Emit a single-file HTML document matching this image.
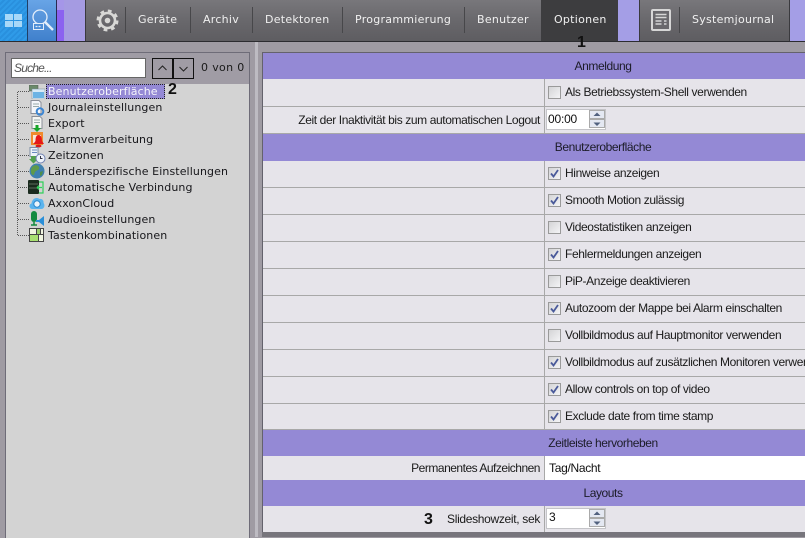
<!DOCTYPE html>
<html><head><meta charset="utf-8"><style>
html,body{margin:0;padding:0}
body{width:805px;height:537px;overflow:hidden;position:relative;background:#9f9ba3;font-family:"Liberation Sans",sans-serif}
.a{position:absolute}
.nav{position:absolute;top:0;height:41px;font:11px/40px "DejaVu Sans",sans-serif;letter-spacing:.27px;color:#f0f0f0;white-space:nowrap}
.sep{position:absolute;top:7px;width:1px;height:26px;background:#47474a}
.hd{position:absolute;left:263px;width:542px;background:#9489d5;font-size:12px;color:#1c1c28;letter-spacing:-.42px}
.hd span{position:absolute;left:0;width:680px;text-align:center;white-space:nowrap}
.r{position:absolute;left:263px;width:542px;background:#e6e4ea;border-bottom:1px solid #a8a8a8;box-sizing:border-box}
.r:before{content:"";position:absolute;left:281px;top:0;bottom:0;width:1px;background:#a8a8a8}
.l{position:absolute;right:265px;font-size:12px;color:#1a1a1a;white-space:nowrap;letter-spacing:-.39px}
.t{position:absolute;left:302px;font-size:12px;color:#1a1a1a;white-space:nowrap;letter-spacing:-.38px}
.c{position:absolute;left:285px;width:11px;height:11px;border:1px solid #9a9a9a;background:linear-gradient(135deg,#d4d4d6,#f4f4f6)}
.c svg{position:absolute;left:1px;top:1px}
.tr{position:absolute;left:48px;font:11px/14px "DejaVu Sans",sans-serif;color:#16161a;letter-spacing:.1px;white-space:nowrap}
.i{position:absolute;left:29px}
.d{position:absolute;left:18px;width:11px;height:0;border-top:1px dotted #555}
.b{position:absolute;font:bold 16px "Liberation Sans",sans-serif;color:#111}
</style></head><body>

<!-- top bar -->
<div class="a" style="left:0;top:0;width:805px;height:41px;background:linear-gradient(#78777b,#69686c 50%,#5e5d61)"></div>
<div class="a" style="left:0;top:41px;width:805px;height:1px;background:#2c2c30"></div>
<div class="a" style="left:0;top:0;width:27px;height:41px;background:repeating-linear-gradient(135deg,#2f9be8 0 2px,#2990de 2px 4px)"></div>
<div class="a" style="left:27px;top:0;width:1px;height:41px;background:#1f3f66"></div>
<div class="a" style="left:28px;top:0;width:28px;height:41px;background:linear-gradient(#68a4e6,#4080cc)"></div>
<div class="a" style="left:56px;top:0;width:1px;height:41px;background:#2a2a50"></div>
<div class="a" style="left:57px;top:0;width:7px;height:41px;background:linear-gradient(#a596e8 0 24%,#8b62f0 24%,#8b62f0)"></div>
<div class="a" style="left:64px;top:0;width:21px;height:41px;background:#a59be2"></div>
<div class="a" style="left:85px;top:0;width:1px;height:41px;background:#3a3a3e"></div>
<svg class="a" style="left:4px;top:13px" width="20" height="16"><rect x="1" y="1" width="8" height="6" fill="#a8d8f8"/><rect x="10" y="1" width="8" height="6" fill="#a8d8f8"/><rect x="1" y="8" width="8" height="6" fill="#a8d8f8"/><rect x="10" y="8" width="8" height="6" fill="#a8d8f8"/></svg>
<svg class="a" style="left:31px;top:8px" width="24" height="24" fill="none" stroke="#e4eefa"><circle cx="9" cy="9" r="7" stroke-width="1.300"/><path d="M14 14l8 8" stroke-width="2.400"/><rect x="2.500" y="15.500" width="10" height="6" fill="#4d8dd6" stroke-width="1"/><path d="M4.500 18.500h6" stroke-width="1.200" stroke-dasharray="2 1"/></svg>
<svg class="a" style="left:96px;top:9px" width="23" height="23" viewBox="0 0 23 23" fill="none"><circle cx="11.500" cy="11.500" r="9.500" stroke="#d8d8d6" stroke-width="3" stroke-dasharray="3.700 3.770"/><circle cx="11.500" cy="11.500" r="7.500" stroke="#d8d8d6" stroke-width="2.600"/><circle cx="11.500" cy="11.500" r="2.800" fill="#d8d8d6"/></svg>
<div class="sep" style="left:125px"></div>
<div class="nav" style="left:138px">Geräte</div>
<div class="sep" style="left:190px"></div>
<div class="nav" style="left:203px">Archiv</div>
<div class="sep" style="left:252px"></div>
<div class="nav" style="left:265px">Detektoren</div>
<div class="sep" style="left:342px"></div>
<div class="nav" style="left:355px">Programmierung</div>
<div class="sep" style="left:464px"></div>
<div class="nav" style="left:477px">Benutzer</div>
<div class="a" style="left:541px;top:0;width:77px;height:41px;background:#3d3d3f"></div>
<div class="nav" style="left:554px">Optionen</div>
<div class="a" style="left:618px;top:0;width:21px;height:41px;background:#a49ee6;border-right:1px solid #3a3a3e"></div>
<svg class="a" style="left:651px;top:9px" width="20" height="22"><rect x="1" y="1" width="18" height="20" rx="1" fill="#69686c" stroke="#d6d6d6" stroke-width="2"/><path d="M4.500 5.500h11M4.500 8.500h11M4.500 12h6M13 12h2.500M4.500 15h6M13 15h2.500" stroke="#d6d6d6" stroke-width="1.500"/></svg>
<div class="sep" style="left:679px"></div>
<div class="nav" style="left:692px">Systemjournal</div>
<div class="a" style="left:789px;top:0;width:16px;height:41px;background:#a49ee6;border-left:1px solid #3a3a3e"></div>

<!-- left panel -->
<div class="a" style="left:5px;top:52px;width:243px;height:485px;border:1px solid #6e6c78;border-bottom:0;background:#d3d3d3"></div>
<div class="a" style="left:6px;top:53px;width:243px;height:31px;background:#a09ca5"></div>
<div class="a" style="left:11px;top:58px;width:135px;height:20px;background:#fff;border:1px solid #666;box-sizing:border-box;font:italic 12px/18px 'Liberation Sans',sans-serif;color:#555;padding-left:2px;letter-spacing:-.8px">Suche...</div>
<div class="a" style="left:152px;top:58px;width:21px;height:21px;border:1px solid #111;box-sizing:border-box"><svg width="19" height="19"><path d="M5.500 11l4-4 4 4" fill="none" stroke="#222"/></svg></div>
<div class="a" style="left:173px;top:58px;width:21px;height:21px;border:1px solid #111;box-sizing:border-box"><svg width="19" height="19"><path d="M5.500 8l4 4 4-4" fill="none" stroke="#222"/></svg></div>
<div class="a" style="left:201px;top:61px;font:11px/14px 'DejaVu Sans',sans-serif;color:#1a1a1a;letter-spacing:.35px;white-space:nowrap">0 von 0</div>

<!-- tree -->
<div class="a" style="left:17px;top:92px;width:0;height:143px;border-left:1px dotted #555"></div>
<div class="d" style="top:91px"></div><div class="d" style="top:107px"></div><div class="d" style="top:123px"></div><div class="d" style="top:139px"></div><div class="d" style="top:155px"></div><div class="d" style="top:171px"></div><div class="d" style="top:187px"></div><div class="d" style="top:203px"></div><div class="d" style="top:219px"></div><div class="d" style="top:235px"></div>
<div class="a" style="left:46px;top:84px;width:119px;height:15px;background:#9489d5;border:1px dotted #222;box-sizing:border-box"></div>
<div class="tr" style="top:85px;color:#f4f4fa">Benutzeroberfläche</div>
<div class="tr" style="top:101px">Journaleinstellungen</div>
<div class="tr" style="top:117px">Export</div>
<div class="tr" style="top:133px">Alarmverarbeitung</div>
<div class="tr" style="top:149px">Zeitzonen</div>
<div class="tr" style="top:165px">Länderspezifische Einstellungen</div>
<div class="tr" style="top:181px">Automatische Verbindung</div>
<div class="tr" style="top:197px">AxxonCloud</div>
<div class="tr" style="top:213px">Audioeinstellungen</div>
<div class="tr" style="top:229px">Tastenkombinationen</div>

<svg class="i" style="top:85px" width="16" height="14"><rect x="0" y="0" width="9" height="6" fill="#6a8a6a" stroke="#555" stroke-width=".5"/><rect x="3" y="4" width="13" height="10" fill="#d8eaf6" stroke="#7a8a99" stroke-width=".5"/><rect x="4" y="7" width="11" height="6" fill="#6cb3e4"/></svg>
<svg class="i" style="top:100px" width="16" height="16" style="left:31px"><path d="M2 .5h8l2 2v11H2z" fill="#f4f6fa" stroke="#8a8f99"/><path d="M4 4h6M4 6.500h6" stroke="#9aa"/><circle cx="11" cy="11.500" r="3.300" fill="none" stroke="#3c86d4" stroke-width="2"/></svg>
<svg class="i" style="top:116px" width="16" height="16"><path d="M3 .5h8l2 2v10H3z" fill="#f4f6f4" stroke="#8a8f99"/><path d="M5 4h6M5 6.500h6" stroke="#9aa"/><path d="M6.500 9h3v3h2.500l-4 4-4-4h2.500z" fill="#17a52b"/></svg>
<svg class="i" style="top:132px" width="16" height="16"><rect x="2" y="0" width="12" height="13" fill="#f08a2c"/><rect x="4" y="3" width="8" height="8" fill="#f8e8d8"/><path d="M9.500 3c3 0 3.500 3.500 3.500 6l2 3H4.500l2-3c0-3 .5-6 3-6z" fill="#e51818"/><ellipse cx="9.500" cy="14" rx="3" ry="1.500" fill="#d81818"/></svg>
<svg class="i" style="top:147px" width="17" height="17"><path d="M1 .5h8v9H1z" fill="#eef2f8" stroke="#7f8fa5"/><path d="M3 3h5M3 5.500h5" stroke="#6a8ac0"/><path d="M2 9h5v3h2l-4.500 4.500L0 12h2z" fill="#55a050"/><circle cx="11.500" cy="11.500" r="4.500" fill="#eef2fa" stroke="#6e80b0"/><path d="M11.500 9v2.500h2" stroke="#334" fill="none"/></svg>
<svg class="i" style="top:163px" width="16" height="16"><circle cx="8" cy="8" r="7.500" fill="#3f80b0"/><path d="M3 4c3-3 6-2 7 0s-1 3-3 4-1 4-3 4-3-5-1-8z" fill="#5f9a4a"/><path d="M11 9l3-1-1 4-2 1z" fill="#4f8e4a"/></svg>
<svg class="i" style="top:179px;left:28px" width="16" height="16"><rect x="0" y="1" width="11" height="14" rx="1" fill="#1a2a1e"/><path d="M1 5h9M1 9h9" stroke="#5a6a5a"/><path d="M11 3h4v11h-4M9 8.500h5M9 8.500l2-2M9 8.500l2 2" fill="none" stroke="#2fd05a" stroke-width="1.200"/></svg>
<svg class="i" style="top:195px" width="16" height="16"><path d="M3.500 14C0 14-.5 9 2.500 8.500 3 4 7 1.500 10.500 4c3-.5 4.500 2 4 4 2 2 .5 6-2 6z" fill="#5ab4ee"/><circle cx="8" cy="9" r="3.200" fill="#eaf4fc" stroke="#2a86cc"/></svg>
<svg class="i" style="top:211px" width="17" height="16"><rect x="2" y="0" width="6" height="11" rx="3" fill="#148a3e"/><path d="M5 11v3M2 14h6" stroke="#148a3e" stroke-width="1.500"/><path d="M7 9h3l5-4v10l-5-4H7z" fill="#2a8fd8"/></svg>
<svg class="i" style="top:228px" width="15" height="14"><rect x="0" y="0" width="15" height="14" fill="#444"/><rect x="1" y="1" width="6" height="5" fill="#f0f5e0"/><rect x="8" y="1" width="3" height="5" fill="#9ad06a"/><rect x="12" y="1" width="2" height="5" fill="#f0f5e0"/><rect x="1" y="7" width="8" height="6" fill="#a8e070"/><rect x="10" y="7" width="4" height="6" fill="#f0f5e0"/></svg>

<div class="b" style="left:168px;top:81px">2</div>

<!-- splitter -->
<div class="a" style="left:255px;top:42px;width:3px;height:495px;background:#bdbbc2"></div>
<div class="a" style="left:262px;top:52px;width:543px;height:1px;background:#64626c"></div>
<div class="a" style="left:262px;top:52px;width:1px;height:480px;background:#64626c"></div>
<div class="a" style="left:262px;top:532px;width:543px;height:5px;background:#77757c"></div>

<div class="b" style="left:577px;top:34px">1</div>

<!-- table -->
<div class="hd" style="top:53px;height:26px"><span style="top:6px">Anmeldung</span></div>
<div class="r" style="top:79px;height:28px"><div class="c" style="top:7px"></div><div class="t" style="top:6px">Als Betriebssystem-Shell verwenden</div></div>
<div class="r" style="top:107px;height:27px"><div class="l" style="top:6px">Zeit der Inaktivität bis zum automatischen Logout</div>
<div class="a" style="left:283px;top:2px;width:60px;height:21px;background:#fff;border:1px solid #c4c4c8;box-sizing:border-box;font-size:12px;line-height:19px;padding-left:1px;color:#111;letter-spacing:-.2px">00:00</div>
<svg class="a" style="left:326px;top:3px" width="17" height="19"><rect x=".5" y=".5" width="15" height="8" fill="#e4e8f2" stroke="#aaa"/><rect x=".5" y="9.500" width="15" height="8" fill="#e4e8f2" stroke="#aaa"/><path d="M4.500 6l3.500-3.500L11.500 6zM4.500 12.500h7L8 16z" fill="#51617f"/></svg></div>
<div class="hd" style="top:134px;height:27px"><span style="top:6px">Benutzeroberfläche</span></div>
<div class="r" style="top:161px;height:27px"><div class="c" style="top:6px"><svg width="9" height="9"><path d="M1 4.500l2.500 3L8 1" fill="none" stroke="#4a5a9a" stroke-width="1.800"/></svg></div><div class="t" style="top:5px">Hinweise anzeigen</div></div>
<div class="r" style="top:188px;height:27px"><div class="c" style="top:6px"><svg width="9" height="9"><path d="M1 4.500l2.500 3L8 1" fill="none" stroke="#4a5a9a" stroke-width="1.800"/></svg></div><div class="t" style="top:5px">Smooth Motion zulässig</div></div>
<div class="r" style="top:215px;height:27px"><div class="c" style="top:6px"></div><div class="t" style="top:5px">Videostatistiken anzeigen</div></div>
<div class="r" style="top:242px;height:27px"><div class="c" style="top:6px"><svg width="9" height="9"><path d="M1 4.500l2.500 3L8 1" fill="none" stroke="#4a5a9a" stroke-width="1.800"/></svg></div><div class="t" style="top:5px">Fehlermeldungen anzeigen</div></div>
<div class="r" style="top:269px;height:27px"><div class="c" style="top:6px"></div><div class="t" style="top:5px">PiP-Anzeige deaktivieren</div></div>
<div class="r" style="top:296px;height:27px"><div class="c" style="top:6px"><svg width="9" height="9"><path d="M1 4.500l2.500 3L8 1" fill="none" stroke="#4a5a9a" stroke-width="1.800"/></svg></div><div class="t" style="top:5px">Autozoom der Mappe bei Alarm einschalten</div></div>
<div class="r" style="top:323px;height:27px"><div class="c" style="top:6px"></div><div class="t" style="top:5px">Vollbildmodus auf Hauptmonitor verwenden</div></div>
<div class="r" style="top:350px;height:27px;overflow:hidden"><div class="c" style="top:6px"><svg width="9" height="9"><path d="M1 4.500l2.500 3L8 1" fill="none" stroke="#4a5a9a" stroke-width="1.800"/></svg></div><div class="t" style="top:5px">Vollbildmodus auf zusätzlichen Monitoren verwenden</div></div>
<div class="r" style="top:377px;height:27px"><div class="c" style="top:6px"><svg width="9" height="9"><path d="M1 4.500l2.500 3L8 1" fill="none" stroke="#4a5a9a" stroke-width="1.800"/></svg></div><div class="t" style="top:5px">Allow controls on top of video</div></div>
<div class="r" style="top:404px;height:26px"><div class="c" style="top:6px"><svg width="9" height="9"><path d="M1 4.500l2.500 3L8 1" fill="none" stroke="#4a5a9a" stroke-width="1.800"/></svg></div><div class="t" style="top:5px">Exclude date from time stamp</div></div>
<div class="hd" style="top:430px;height:26px"><span style="top:6px">Zeitleiste hervorheben</span></div>
<div class="r" style="top:456px;height:24px;border-bottom:0"><div class="a" style="left:282px;top:0;width:260px;height:24px;background:#fff"></div><div class="l" style="top:5px;letter-spacing:-.49px">Permanentes Aufzeichnen</div><div class="a" style="left:286px;top:5px;font-size:12px;color:#111;letter-spacing:-.3px">Tag/Nacht</div></div>
<div class="hd" style="top:480px;height:26px"><span style="top:6px">Layouts</span></div>
<div class="r" style="top:506px;height:26px;border-bottom:0"><div class="l" style="top:6px;letter-spacing:-.32px">Slideshowzeit, sek</div>
<div class="a" style="left:283px;top:2px;width:60px;height:21px;background:#fff;border:1px solid #c4c4c8;box-sizing:border-box;font-size:12px;line-height:16px;padding-left:2px;color:#111">3</div>
<svg class="a" style="left:326px;top:3px" width="17" height="19"><rect x=".5" y=".5" width="15" height="8" fill="#e4e8f2" stroke="#aaa"/><rect x=".5" y="9.500" width="15" height="8" fill="#e4e8f2" stroke="#aaa"/><path d="M4.500 6l3.500-3.500L11.500 6zM4.500 12.500h7L8 16z" fill="#51617f"/></svg></div>
<div class="b" style="left:424px;top:511px">3</div>
</body></html>
